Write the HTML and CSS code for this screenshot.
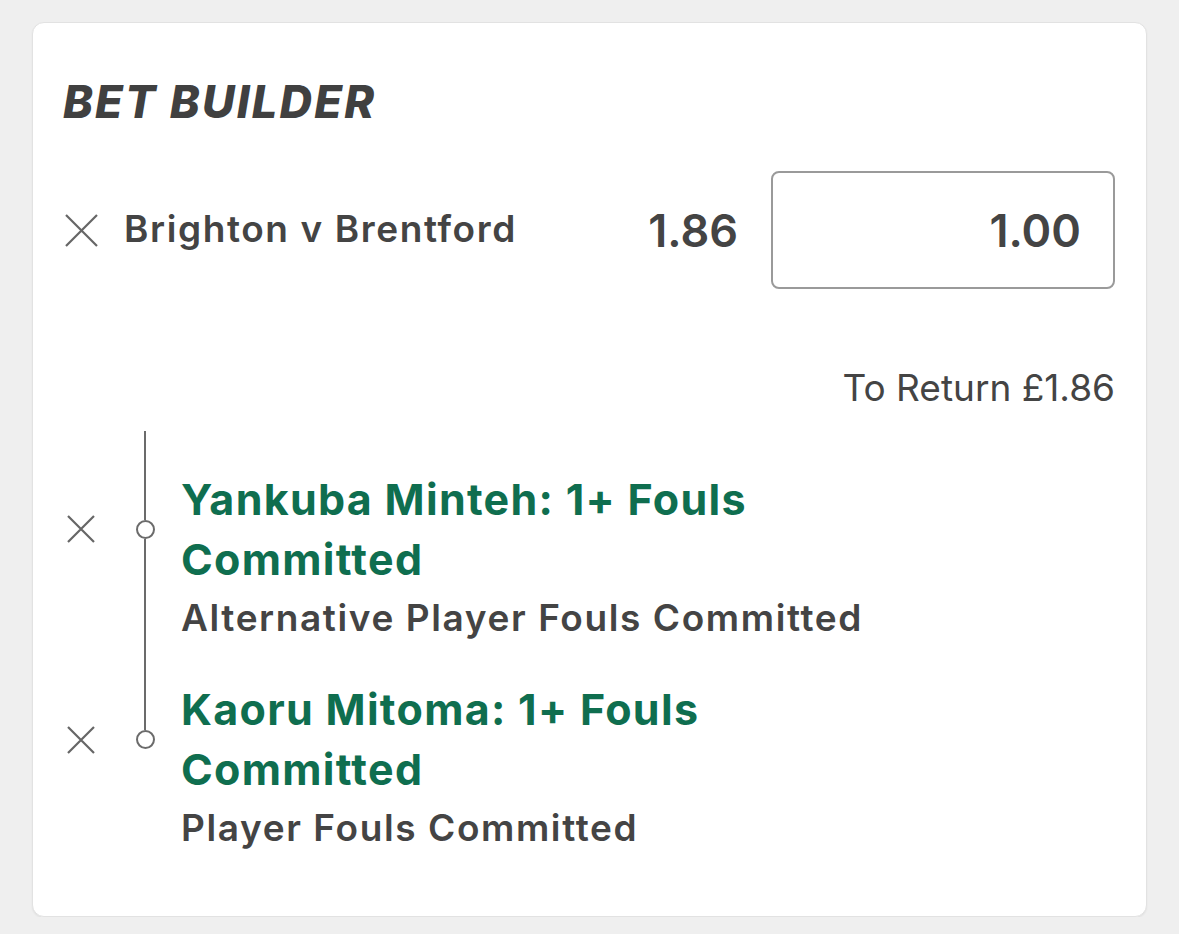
FILE: index.html
```html
<!DOCTYPE html>
<html lang="en">
<head>
<meta charset="utf-8">
<title>Bet Builder</title>
<link rel="stylesheet" href="styles.css">
</head>
<body>
<div class="card">
  <h1 class="title">BET BUILDER</h1>
  <div class="match-row">
    <svg class="x-icon x-large" viewBox="0 0 33 33" aria-hidden="true"><path d="M1 1 L32 32 M32 1 L1 32" /></svg>
    <div class="match-name">Brighton v Brentford</div>
    <div class="odds">1.86</div>
    <div class="stake">1.00</div>
  </div>
  <div class="to-return">To Return £1.86</div>
  <div class="legs">
    <div class="leg">
      <div class="leg-x"><svg class="x-icon x-small" viewBox="0 0 28 28" aria-hidden="true"><path d="M1 1 L27 27 M27 1 L1 27" /></svg></div>
      <div class="rail"><span class="seg-top"></span><span class="dot"></span><span class="seg-bottom"></span></div>
      <div class="leg-text">
        <div class="leg-title">Yankuba Minteh: 1+ Fouls Committed</div>
        <div class="leg-sub">Alternative Player Fouls Committed</div>
      </div>
    </div>
    <div class="leg last">
      <div class="leg-x"><svg class="x-icon x-small" viewBox="0 0 28 28" aria-hidden="true"><path d="M1 1 L27 27 M27 1 L1 27" /></svg></div>
      <div class="rail"><span class="seg-top"></span><span class="dot"></span><span class="seg-bottom"></span></div>
      <div class="leg-text">
        <div class="leg-title">Kaoru Mitoma: 1+ Fouls Committed</div>
        <div class="leg-sub">Player Fouls Committed</div>
      </div>
    </div>
  </div>
</div>
</body>
</html>
```

FILE: styles.css
```css
* { box-sizing: border-box; }
html, body { margin: 0; padding: 0; }
body {
  background: #efefef;
  font-family: Inter, "Noto Sans", "Liberation Sans", sans-serif;
  color: #444444;
}
.card {
  margin: 22px 32px 0 32px;
  height: 895px;
  background: #ffffff;
  border: 1px solid #e2e2e2;
  border-radius: 12px;
  box-shadow: 0 1px 2px rgba(0,0,0,0.06);
  padding: 51px 31px 0 30px;
}
.title {
  margin: 0;
  font-family: Inter, "Liberation Sans", sans-serif;
  font-weight: 800;
  font-style: italic;
  font-size: 45px;
  line-height: 56px;
  letter-spacing: 2.2px;
  color: #404040;
}
.match-row {
  margin-top: 41px;
  display: flex;
  align-items: center;
  height: 118px;
}
.x-icon path {
  stroke: #666666;
  stroke-width: 2.2;
  fill: none;
}
.x-large {
  width: 33px;
  height: 33px;
  margin-left: 2px;
  flex: none;
}
.match-name {
  margin-left: 26px;
  margin-top: -3px;
  font-size: 37px;
  font-weight: 600;
  letter-spacing: 1.6px;
  flex: 1;
}
.odds {
  font-size: 45px;
  font-weight: 600;
  margin-right: 33px;
}
.stake {
  width: 344px;
  height: 118px;
  border: 2px solid #9a9a9a;
  border-radius: 8px;
  display: flex;
  align-items: center;
  justify-content: flex-end;
  padding-right: 32px;
  font-size: 45px;
  font-weight: 600;
}
.to-return {
  margin-top: 75px;
  text-align: right;
  font-size: 37px;
  line-height: 48px;
  font-weight: 400;
  padding-right: 0;
}
.legs {
  margin-top: 19px;
}
.leg {
  display: flex;
  align-items: stretch;
}
.leg-x {
  width: 72px;
  flex: none;
  padding-top: 84px;
  padding-left: 4px;
}
.x-small {
  width: 28px;
  height: 28px;
  display: block;
}
.rail {
  width: 20px;
  flex: none;
  display: flex;
  flex-direction: column;
  align-items: center;
}
.seg-top {
  width: 2px;
  height: 89px;
  background: #6b6b6b;
}
.leg.last .seg-top { height: 88px; }
.dot {
  width: 19px;
  height: 19px;
  border: 2px solid #6b6b6b;
  border-radius: 50%;
  flex: none;
}
.seg-bottom {
  width: 2px;
  flex: 1;
  background: #6b6b6b;
}
.leg.last .seg-bottom { background: transparent; }
.leg-text {
  margin-left: 26px;
  padding-top: 38px;
  width: 740px;
}
.leg.last .leg-text { padding-top: 37px; }
.leg-title {
  font-size: 43px;
  line-height: 60px;
  font-weight: 700;
  letter-spacing: 1.3px;
  color: #0f6e4f;
}
.leg-sub {
  margin-top: 5px;
  font-size: 37px;
  line-height: 48px;
  font-weight: 600;
  letter-spacing: 1.6px;
  color: #444444;
}
```
